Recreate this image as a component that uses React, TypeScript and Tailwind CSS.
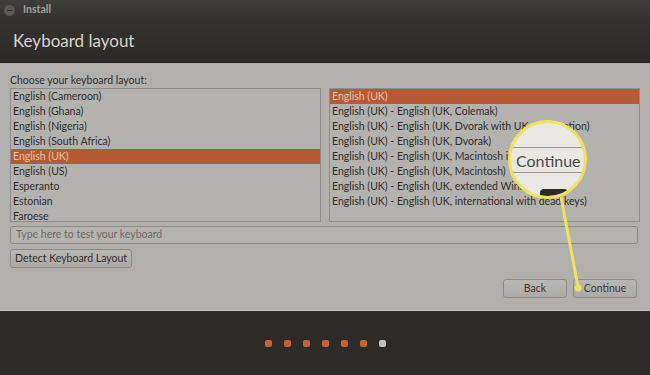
import React from "react";

const leftItems = [
	"English (Cameroon)",
	"English (Ghana)",
	"English (Nigeria)",
	"English (South Africa)",
	"English (UK)",
	"English (US)",
	"Esperanto",
	"Estonian",
	"Faroese",
];

const rightItems = [
	"English (UK)",
	"English (UK) - English (UK, Colemak)",
	"English (UK) - English (UK, Dvorak with UK punctuation)",
	"English (UK) - English (UK, Dvorak)",
	"English (UK) - English (UK, Macintosh international)",
	"English (UK) - English (UK, Macintosh)",
	"English (UK) - English (UK, extended WinKeys)",
	"English (UK) - English (UK, international with dead keys)",
];

const ListBox = ({ items, selected, className }: { items: string[]; selected: string; className?: string }) => (
	<div className={`h-[134px] overflow-hidden border border-[#8f8d89] bg-[#b4b2ae] ${className ?? ""}`}>
		{items.map((item) => (
			<div
				key={item}
				className={`h-[15px] truncate px-[2px] leading-[14px] ${
					item === selected ? "bg-[#b65a33] text-[#e6c3b0]" : "text-[#2f2e2c]"
				}`}
			>
				{item}
			</div>
		))}
	</div>
);

export default function App() {
	return (
		<div
			className="relative flex h-[375px] w-[650px] flex-col overflow-hidden bg-[#2d2b27] text-[10.5px]"
			style={{ fontFamily: 'Lato, "Noto Sans", sans-serif' }}
		>
			{/* title bar */}
			<div className="flex h-[20px] items-center gap-[8px] bg-gradient-to-b from-[#403e3a] to-[#34322e] pl-[4px]">
				<div className="flex h-[11px] w-[11px] items-center justify-center rounded-full bg-[#5a5854]">
					<div className="h-[1px] w-[5px] bg-[#2d2b27]" />
				</div>
				<span className="text-[10.5px] font-bold text-[#a29f99]">Install</span>
			</div>

			{/* header */}
			<div className="flex h-[42px] items-center bg-gradient-to-b from-[#34322e] to-[#2c2a26] pl-[13px]">
				<span className="text-[17px] text-[#d6d2cb]">Keyboard layout</span>
			</div>

			{/* body */}
			<div className="flex h-[248px] flex-col border-t border-[#1f1e1b] bg-[#b2b0ac] px-[10px] pt-[10px]">
				<div className="h-[15px] leading-[14px] text-[#2f2e2c]">Choose your keyboard layout:</div>
				<div className="flex gap-[8px]">
					<ListBox items={leftItems} selected="English (UK)" className="w-[311px]" />
					<ListBox items={rightItems} selected="English (UK)" className="w-[311px]" />
				</div>
				<div className="mt-[4px] flex h-[18px] w-[628px] items-center rounded-[3px] border border-[#8c8a86] bg-[#b6b4b0] pl-[5px] text-[#6a6864]">
					Type here to test your keyboard
				</div>
				<div className="mt-[5px] flex">
					<div className="flex h-[19px] items-center rounded-[3px] border border-[#8c8a86] bg-gradient-to-b from-[#bab8b4] to-[#acaaa6] px-[4px] text-[#2f2e2c]">
						Detect Keyboard Layout
					</div>
				</div>
				<div className="mt-[11px] flex justify-end gap-[6px] pr-[3px]">
					<div className="flex h-[19px] w-[64px] items-center justify-center rounded-[3px] border border-[#8c8a86] bg-gradient-to-b from-[#bab8b4] to-[#acaaa6] text-[#3a3936]">
						Back
					</div>
					<div className="flex h-[19px] w-[64px] items-center justify-center rounded-[3px] border border-[#8c8a86] bg-gradient-to-b from-[#bab8b4] to-[#acaaa6] text-[#3a3936]">
						Continue
					</div>
				</div>
			</div>

			{/* footer with progress dots */}
			<div className="flex flex-1 items-center justify-center gap-[12px] border-t border-[#c8c6c2]">
				{[0, 1, 2, 3, 4, 5].map((i) => (
					<div key={i} className="h-[7px] w-[7px] rounded-[2px] bg-[#c9602f]" />
				))}
				<div className="h-[7px] w-[7px] rounded-[2px] bg-[#c4c2be]" />
			</div>

			{/* magnifier callout */}
			<svg className="pointer-events-none absolute left-0 top-0" width="650" height="375">
				<line x1="561" y1="197" x2="578" y2="287" stroke="#eee556" strokeWidth="3" />
				<circle cx="578" cy="288" r="3.5" fill="#eee556" />
			</svg>
			<div className="pointer-events-none absolute left-[508px] top-[120px] h-[79px] w-[79px] overflow-hidden rounded-full border-[3px] border-[#eee556] bg-[#e9e8e5]">
				<div className="absolute left-0 top-[24px] h-[1px] w-full bg-[#9a9894]" />
				<div className="absolute left-0 top-[27px] flex h-[22px] w-[73px] items-center whitespace-nowrap pl-[5px] text-[16px] text-[#4a4845]">
					Continue
				</div>
				<div className="absolute left-0 top-[49px] h-[1px] w-full bg-[#9a9894]" />
				<div className="absolute bottom-0 left-[29px] h-[7px] w-[28px] rounded-t-[4px] bg-[#2d2b27]" />
			</div>
		</div>
	);
}
